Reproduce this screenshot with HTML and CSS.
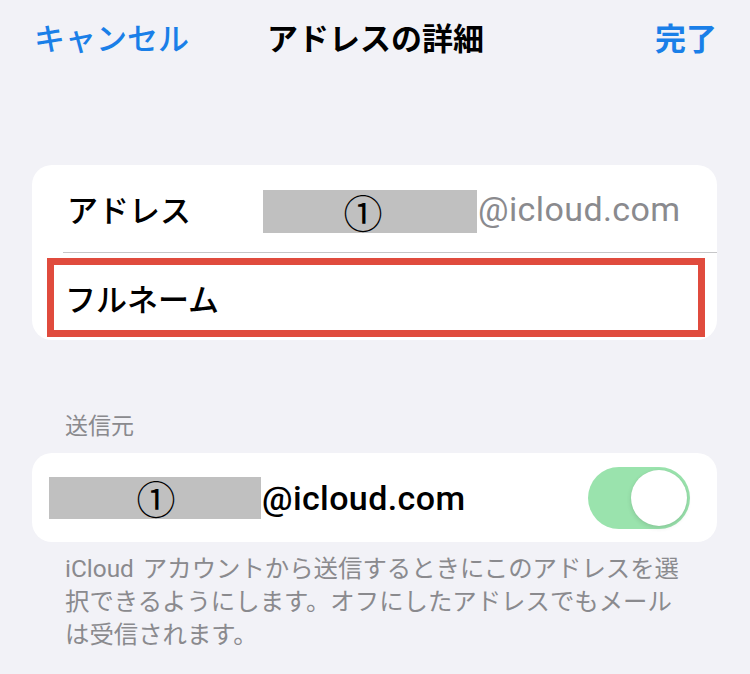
FILE: index.html
```html
<!DOCTYPE html>
<html lang="ja">
<head>
<meta charset="utf-8">
<title>アドレスの詳細</title>
<link rel="stylesheet" href="styles.css">
</head>
<body>
<header class="nav">
  <span class="nav-btn nav-cancel">キャンセル</span>
  <h1 class="nav-title">アドレスの詳細</h1>
  <span class="nav-btn nav-done">完了</span>
</header>
<main>
  <section class="group group-top">
    <div class="row row-address">
      <span class="label label-address">アドレス</span>
      <span class="mask mask-1">①</span>
      <span class="domain domain-muted">@icloud.com</span>
    </div>
    <div class="sep"></div>
    <div class="row-wrap">
      <div class="row row-name highlight">
        <span class="label">フルネーム</span>
      </div>
    </div>
  </section>
  <div class="section-header">送信元</div>
  <section class="group group-from">
    <div class="row row-from">
      <span class="mask mask-2">①</span>
      <span class="domain domain-strong">@icloud.com</span>
      <span class="toggle"><span class="knob"></span></span>
    </div>
  </section>
  <p class="footer"><span class="brand">iCloud</span>アカウントから送信するときにこのアドレスを選<br>択できるようにします。オフにしたアドレスでもメール<br>は受信されます。</p>
</main>
</body>
</html>
```

FILE: styles.css
```css
html, body {
  margin: 0;
  padding: 0;
}

body {
  background: #f2f2f7;
  font-family: Roboto, "Noto Sans CJK JP", sans-serif;
  color: #000;
  width: 750px;
  height: 674px;
  overflow: hidden;
}

.nav {
  height: 78px;
  box-sizing: border-box;
  display: grid;
  grid-template-columns: 1fr auto 1fr;
  align-items: center;
  padding: 0 33px 6px 34px;
}

.nav-btn {
  font-family: "Noto Sans CJK JP", sans-serif;
  font-size: 31px;
  line-height: 1;
  color: #1a7fe8;
  font-weight: 500;
}

.nav-done {
  justify-self: end;
  font-weight: 700;
}

.nav-title {
  margin: 0;
  font-family: "Noto Sans CJK JP", sans-serif;
  font-size: 31px;
  font-weight: 700;
  line-height: 1;
}

.group {
  background: #fff;
  border-radius: 20px;
  margin: 0 33px 0 32px;
}

.group-top {
  margin-top: 87px;
}

.row {
  display: flex;
  align-items: center;
}

.row-address {
  height: 87px;
  padding-left: 35px;
}

.label {
  font-family: "Noto Sans CJK JP", sans-serif;
  font-size: 31px;
  font-weight: 500;
  line-height: 1;
}

.label-address {
  width: 196px;
  flex: none;
}

.mask {
  flex: none;
  box-sizing: border-box;
  background: #c0c0c0;
  display: flex;
  align-items: center;
  justify-content: center;
  font-family: "Noto Sans CJK JP", sans-serif;
  font-size: 39px;
  font-weight: 400;
  line-height: 1;
  color: #000;
}

.mask-1 {
  width: 214px;
  height: 43px;
  margin-top: 6px;
  padding-right: 14px;
}

.mask-2 {
  width: 212px;
  height: 42px;
  padding-left: 2px;
}

.domain {
  font-size: 34px;
  letter-spacing: 0.4px;
  line-height: 1;
  margin-left: 1px;
}

.domain-muted {
  color: #8a8a8e;
}

.domain-strong {
  color: #000;
  font-weight: 500;
}

.sep {
  height: 1px;
  background: #c6c6c8;
  margin-left: 31px;
}

.row-wrap {
  padding: 5px 12px 3px 15px;
}

.highlight {
  border: 7px solid #e04b3d;
  height: 65px;
  padding-left: 11px;
}

.section-header {
  margin: 69px 0 14px 65px;
  font-family: "Noto Sans CJK JP", sans-serif;
  font-size: 23px;
  line-height: 30px;
  color: #8a8a8e;
}

.row-from {
  height: 89px;
  padding: 0 27px 0 17px;
}

.toggle {
  margin-left: auto;
  flex: none;
  width: 102px;
  height: 62px;
  border-radius: 31px;
  background: #9ae3ad;
  display: flex;
  align-items: center;
  justify-content: flex-end;
  padding-right: 3px;
  box-sizing: border-box;
}

.knob {
  width: 56px;
  height: 56px;
  border-radius: 50%;
  background: #fff;
  box-shadow: 0 2px 5px rgba(0, 0, 0, 0.12), 0 0 1px rgba(0, 0, 0, 0.08);
}

.footer {
  margin: 10px 0 0 65px;
  font-size: 24.4px;
  line-height: 33px;
  color: #8a8a8e;
}

.brand {
  margin-right: 9px;
}
```
